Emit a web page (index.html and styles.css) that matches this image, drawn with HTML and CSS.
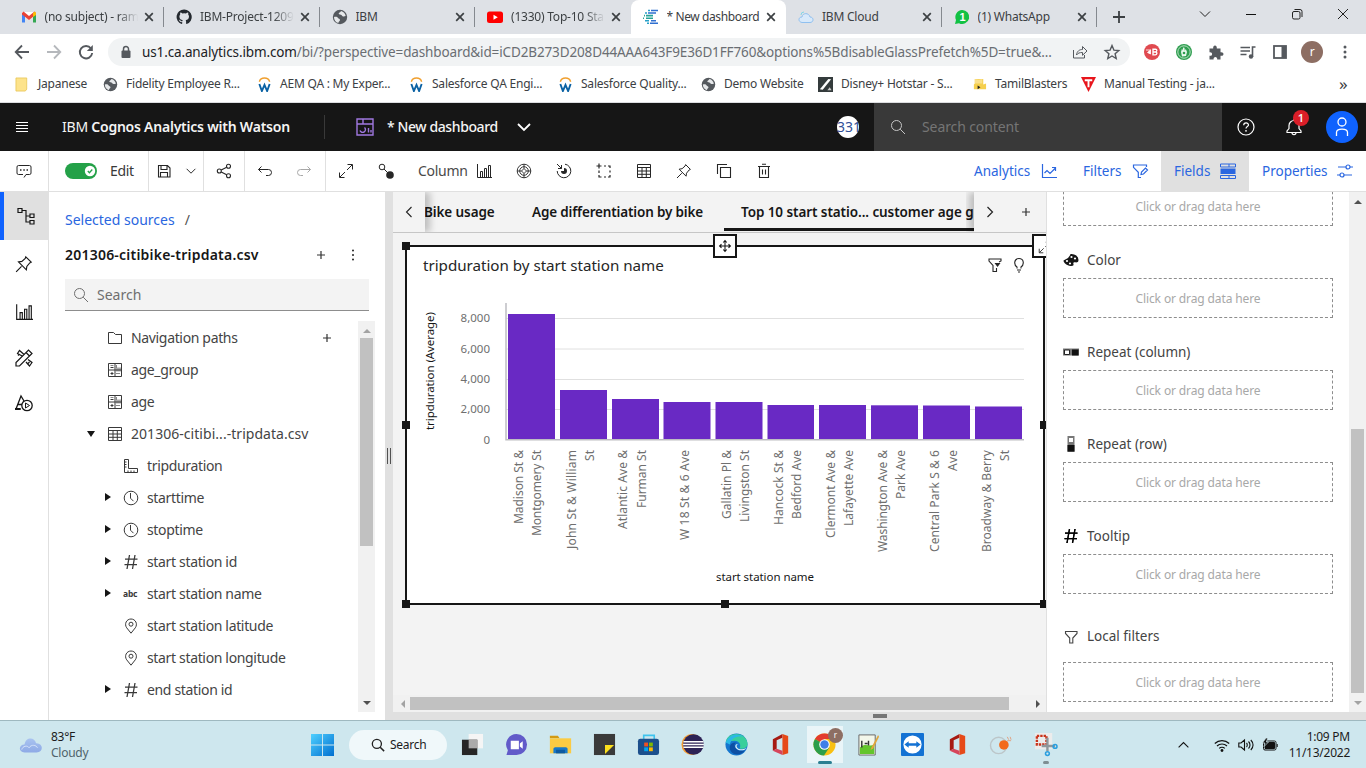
FILE: index.html
```
<!DOCTYPE html>
<html lang="en">
<head>
<meta charset="utf-8">
<title>* New dashboard</title>
<link rel="stylesheet" href="styles.css">
</head>
<body>
<svg class="defs" aria-hidden="true">
  <symbol id="x" viewBox="0 0 10 10"><path d="M1.200 1.200l7.600 7.600M8.800 1.200L1.200 8.800" stroke="#3c4043" stroke-width="1.700" fill="none"/></symbol>
  <symbol id="globe" viewBox="0 0 16 16"><circle cx="8" cy="8" r="7.200" fill="#55595e"/><path d="M2 8c2-.5 3.500 0 4 1s2 .6 2 2-1.800 1.400-1.600 3C3.500 13.300 2 11 2 8zM9 2c-.5 1.500-2.500 1.500-2.300 2.800.2 1.200 2.300.4 3 1.500.6 1.200 2 1.600 4 .8C13.300 4.500 11.500 2.500 9 2z" fill="#e6e8ea"/></symbol>
  <symbol id="aem" viewBox="0 0 16 16"><path d="M2.500 5C4 -.2 12 -.2 13.500 5" fill="none" stroke="#f0a030" stroke-width="1.500"/><path d="M2.500 7.500L5.200 15 8 8.500l2.800 6.500 2.700-7.500" fill="none" stroke="#0b62a4" stroke-width="2"/></symbol>
  <symbol id="pin" viewBox="0 0 16 16"><path d="M1 15l4.800-4.800M9.600 1.600l4.800 4.800-1.300.6-2.600 3.200-.4 3-7-7 3-.5 3-2.700z" fill="none" stroke="currentColor"/></symbol>
  <symbol id="cols" viewBox="0 0 16 16"><path d="M1.500 1v13.500H16M4.500 14V8.500h2V14M8.500 14V5.500h2V14M12.500 14V2.500h2V14" fill="none" stroke="currentColor"/></symbol>
  <symbol id="table" viewBox="0 0 16 16"><path d="M1.500 1.500h13v13h-13zM1.500 4.500h13M1.500 8h13M1.500 11.300h13M6 4.500v10M10.300 4.500v10" fill="none" stroke="currentColor"/></symbol>
  <symbol id="calc" viewBox="0 0 16 16"><path d="M9 5.500h5v4H9z" fill="#aaa"/><path d="M9 11.500h4M3.500 3.500h3M9.500 3v3" stroke="#888" fill="none"/><path d="M1.500 1.500h13v13h-13zM8 1.500v13M1.500 8h13M3.500 5.500h3M3.500 11.500h3M5 10v3" fill="none" stroke="currentColor"/></symbol>
  <symbol id="clock" viewBox="0 0 16 16"><circle cx="8" cy="8" r="6.800" fill="none" stroke="currentColor"/><path d="M7.500 3v5.200l3 3" fill="none" stroke="currentColor"/></symbol>
  <symbol id="hash" viewBox="0 0 16 16"><path d="M6.500 1L4 15M12 1L9.500 15M2 5.200h12.500M1.500 10.700H14" fill="none" stroke="currentColor" stroke-width="1.300"/></symbol>
  <symbol id="loc" viewBox="0 0 16 16"><path d="M8 15.200L3.700 9.800C1 6 3.500 1 8 1s7 5 4.300 8.800z" fill="none" stroke="currentColor"/><circle cx="8" cy="6.200" r="2" fill="none" stroke="currentColor"/></symbol>
  <symbol id="mag" viewBox="0 0 16 16"><circle cx="6.500" cy="6.500" r="5" fill="none" stroke="currentColor"/><path d="M10.200 10.200L15 15" stroke="currentColor"/></symbol>
  <symbol id="plus" viewBox="0 0 16 16"><path d="M8 4v8M4 8h8" stroke="#333" stroke-width="1.200"/></symbol>
  <symbol id="filter" viewBox="0 0 16 16"><path d="M2.500 3.500h11.500v2L9.800 10v5H6.700v-5L2.500 5.500z" fill="none" stroke="currentColor" stroke-width="1.100"/></symbol>
  <symbol id="expand" viewBox="0 0 16 16"><path d="M9.500 1.500h5v5M14 2L9 7M6.500 14.500h-5v-5M2 14l5-5" fill="none" stroke="currentColor"/></symbol>
  <symbol id="office" viewBox="0 0 24 24"><path d="M4 6.500L14 1v4L8 7.500v9l-4 2z" fill="#a61a12"/><path d="M14 1l6 2v18l-6 2z" fill="#e64a19"/><path d="M4 18.500l4-2 6 2V23z" fill="#d6455b"/></symbol>
</svg>

<div class="browser">
  <div class="tabstrip">
    <div class="tab"><svg viewBox="0 0 16 16"><path d="M1 3v10h3V8l4 3 4-3v5h3V3" fill="#fff"/><path d="M1 4.500V13.500h3V7z" fill="#4285f4"/><path d="M15 4.500V13.500h-3V7z" fill="#34a853"/><path d="M1 4l1.500-1.500L8 7l5.500-4.500L15 4v1.500L8 11 1 5.500z" fill="#ea4335"/><path d="M12 4l2-1.500L15 4v2l-3 2z" fill="#fbbc04"/></svg><span class="lbl fade">(no subject) - ram</span><svg class="x"><use href="#x"/></svg></div>
    <div class="tab"><svg viewBox="0 0 16 16"><path d="M8 .5a7.500 7.500 0 0 0-2.400 14.600c.4 0 .6-.2.6-.5v-1.500c-2 .4-2.500-.8-2.700-1.300-.2-.4-.5-.8-.8-1 .8-.2 1.500.2 2 .9.500.8 1.100.7 1.600.5.1-.4.300-.7.500-.9-2-.3-3.400-1.200-3.400-3.700 0-.8.3-1.500.8-2-.1-.5-.2-1.200.1-2 .9 0 1.600.5 2.100.8a7 7 0 0 1 3.600 0c.5-.4 1.300-.8 2.100-.8.300.8.2 1.500.1 2 .5.500.8 1.200.8 2 0 2.500-1.500 3.400-3.400 3.700.3.300.5.800.5 1.500v1.800c0 .3.200.5.600.5A7.500 7.500 0 0 0 8 .5z" fill="#24292f"/></svg><span class="lbl fade">IBM-Project-1209</span><svg class="x"><use href="#x"/></svg></div>
    <div class="tab"><svg><use href="#globe"/></svg><span class="lbl">IBM</span><svg class="x"><use href="#x"/></svg></div>
    <div class="tab nosep"><svg viewBox="0 0 16 16"><rect y="2.500" width="16" height="11.500" rx="2.500" fill="#f00"/><path d="M6.500 5.700v5l4.300-2.500z" fill="#fff"/></svg><span class="lbl fade">(1330) Top-10 Sta</span><svg class="x"><use href="#x"/></svg></div>
    <div class="tab active nosep"><svg viewBox="0 0 16 16"><path d="M8 1.500h7M5 4h8M8 11.800h5M7 14.300h8" stroke="#2f6fd0" stroke-width="1.600"/><path d="M3 6.600h7M3 9.200h7M1 6.600h1M0 9.200h1" stroke="#27a398" stroke-width="1.600"/><path d="M2 4h2M5 1.500h2M2 11.800h4M4 14.300h2" stroke="#28a0c8" stroke-width="1.600"/></svg><span class="lbl">* New dashboard</span><svg class="x"><use href="#x"/></svg></div>
    <div class="tab"><svg viewBox="0 0 16 16"><path d="M4 13.500C0 13 0 8 4 8c.5-4.500 7-4.500 8 0 4 0 4 5.500 0 5.500z" fill="#d8e9fa" stroke="#8fc0f0"/><path d="M3 6a3 3 0 0 1 3-3" fill="none" stroke="#7fd6e8"/></svg><span class="lbl">IBM Cloud</span><svg class="x"><use href="#x"/></svg></div>
    <div class="tab"><svg viewBox="0 0 16 16"><path d="M8 1a7 7 0 1 1-3 13.200L1 15l1-4A7 7 0 0 1 8 1z" fill="#12c143"/><text x="5.500" y="12" font-size="11" font-weight="700" fill="#fff" font-family="Liberation Sans">1</text></svg><span class="lbl">(1) WhatsApp</span><svg class="x"><use href="#x"/></svg></div>
    <svg class="newtab" viewBox="0 0 16 16"><path d="M8 2v12M2 8h12" stroke="#3c4043" stroke-width="1.800"/></svg>
    <div class="winctl">
      <svg viewBox="0 0 16 16"><path d="M3 5.500l5 5 5-5" fill="none" stroke="#222"/></svg>
      <svg viewBox="0 0 16 16"><path d="M3 8.500h10" stroke="#111"/></svg>
      <svg viewBox="0 0 16 16"><rect x="3.500" y="5.500" width="7.500" height="7.500" rx="1.500" fill="none" stroke="#222"/><path d="M5.500 3.500h5.500a2 2 0 0 1 2 2V11" fill="none" stroke="#222"/></svg>
      <svg viewBox="0 0 16 16"><path d="M3 3l10 10M13 3L3 13" stroke="#222"/></svg>
    </div>
  </div>
  <div class="address">
    <svg viewBox="0 0 16 16"><path d="M15 8H2M8 1.500L1.700 8 8 14.500" fill="none" stroke="#55595e" stroke-width="1.800"/></svg>
    <svg viewBox="0 0 16 16"><path d="M1 8h13M8 1.500L14.300 8 8 14.500" fill="none" stroke="#b5b8bc" stroke-width="1.800"/></svg>
    <svg viewBox="0 0 16 16"><path d="M13 4.500A6.200 6.200 0 1 0 14.200 9" fill="none" stroke="#55595e" stroke-width="1.900"/><path d="M14.800 1v6h-6z" fill="#55595e"/></svg>
    <div class="pill">
      <svg viewBox="0 0 16 16"><rect x="3.500" y="6.500" width="9" height="7.500" rx="1" fill="#55595e"/><path d="M5.500 7V5a2.500 2.500 0 0 1 5 0v2" fill="none" stroke="#55595e" stroke-width="1.500"/></svg>
      <span class="url"><b>us1.ca.analytics.ibm.com</b>/bi/?perspective=dashboard&amp;id=iCD2B273D208D44AAA643F9E36D1FF760&amp;options%5BdisableGlassPrefetch%5D=true&amp;...</span>
      <svg class="share" viewBox="0 0 16 16"><path d="M1.500 6v8h11v-3M4.500 11c.5-4 3-5.500 6-5.500V2.500l4.500 4.500-4.500 4.300V8.500c-3 0-4.500.5-6 2.500z" fill="none" stroke="#55595e"/></svg>
      <svg class="star" viewBox="0 0 16 16"><path d="M8 1.500l1.900 4.600 4.900.4-3.700 3.200 1.100 4.800L8 12l-4.200 2.500 1.100-4.800L1.200 6.500l4.900-.4z" fill="none" stroke="#55595e" stroke-width="1.400"/></svg>
    </div>
    <div class="ext">
      <svg viewBox="0 0 16 16"><circle cx="8" cy="8" r="8" fill="#e04a50"/><path d="M2 6h5M3.500 8.500l3-2.500v4z" fill="#fff" stroke="#fff" stroke-width=".8"/><path d="M9 5.200h2.500c2 0 1.500 2.600 0 2.800 2 0 1.700 2.900-.3 2.900H9zM9 8h2.500" fill="none" stroke="#fff" stroke-width="1.400"/></svg>
      <svg viewBox="0 0 16 16"><circle cx="8" cy="8" r="8" fill="#2f9e50"/><circle cx="8" cy="8" r="6.200" fill="none" stroke="#d7f0dc" stroke-width=".8"/><path d="M5 8l1-3.500 1 2V3.500l1.500.2.300 3 1-1.700 1.200 3-1 4-4 .5z" fill="#e8f7ec"/><circle cx="8" cy="9" r="1.300" fill="#2f9e50"/></svg>
      <svg viewBox="0 0 16 16"><path d="M1.500 4.500h3.700c-.6-4 4.200-4 3.600 0h3.700v3.700c4-.6 4 4.200 0 3.600v3.700H9.200c.6-3.500-4.200-3.500-3.600 0H1.500v-3.700c3.500.6 3.500-4.200 0-3.600z" fill="#55595e"/></svg>
      <svg viewBox="0 0 16 16"><path d="M.5 3.500h9.500M.5 7h9.500M.5 10.500h6M12.500 13V3h3" fill="none" stroke="#55595e" stroke-width="1.600"/><circle cx="11" cy="12.500" r="2.200" fill="#55595e"/></svg>
      <svg viewBox="0 0 16 16"><rect x="2" y="2" width="12" height="12" fill="none" stroke="#55595e" stroke-width="1.800"/><path d="M9.500 2H14v12H9.500z" fill="#55595e"/></svg>
      <span class="avatar">r</span>
      <svg viewBox="0 0 16 16"><g fill="#55595e"><circle cx="9" cy="3" r="1.500"/><circle cx="9" cy="8" r="1.500"/><circle cx="9" cy="13" r="1.500"/></g></svg>
    </div>
  </div>
  <div class="bookmarks">
    <div><svg viewBox="0 0 16 16"><path d="M1 1h11.500v12L11 15H1z" fill="#fde38b" stroke="#e8c34f" stroke-width=".8"/></svg>Japanese</div>
    <div><svg><use href="#globe"/></svg>Fidelity Employee R...</div>
    <div><svg><use href="#aem"/></svg>AEM QA : My Exper...</div>
    <div><svg><use href="#aem"/></svg>Salesforce QA Engi...</div>
    <div><svg><use href="#aem"/></svg>Salesforce Quality...</div>
    <div><svg><use href="#globe"/></svg>Demo Website</div>
    <div><svg viewBox="0 0 16 16"><rect width="16" height="16" fill="#343b3c"/><path d="M2 13L11 2l3 .5L5 13.500z" fill="#fff"/><path d="M10 14l2.500-3 2 3z" fill="#ccc"/></svg>Disney+ Hotstar - S...</div>
    <div><svg viewBox="0 0 16 16"><path d="M3 2h9v6l3-1v6H2V8l1-1z" fill="#f5cf4e"/><path d="M3 2l4 1 4-1v5H3z" fill="#fae08a"/><path d="M6 9l3 2-3 2z" fill="#222"/></svg>TamilBlasters</div>
    <div><svg viewBox="0 0 16 16"><path d="M0 0h16L8 16z" fill="#e8151c"/><path d="M4 3.500h8M8 3.500V11" stroke="#fff" stroke-width="2"/></svg>Manual Testing - ja...</div>
    <div class="more">»</div>
  </div>
</div>

<header class="appbar">
  <svg class="burger" viewBox="0 0 16 16"><path d="M2 3.500h12M2 6.500h12M2 9.500h12M2 12.500h12" stroke="#fff"/></svg>
  <div class="brand">IBM <b>Cognos Analytics with Watson</b></div>
  <div class="doc">
    <svg viewBox="0 0 18 18"><path d="M1 1h16v16H1zM1 6h16M7 1v5M12.500 10v4.500M15 12v2.500" fill="none" stroke="#a078e0" stroke-width="1.400"/><path d="M8.500 9.500a2.800 2.800 0 1 1-4.500 3" fill="none" stroke="#a078e0" stroke-width="1.400"/></svg>
    <span>* New dashboard</span>
    <svg class="chev" viewBox="0 0 14 14"><path d="M1 4l6 6 6-6" fill="none" stroke="#fff" stroke-width="1.800"/></svg>
  </div>
  <div class="count"><span>331</span></div>
  <div class="topsearch"><svg><use href="#mag"/></svg><span>Search content</span></div>
  <div class="user">
    <svg class="help" viewBox="0 0 18 18"><circle cx="9" cy="9" r="8" fill="none" stroke="#fff" stroke-width="1.200"/><path d="M6.700 7.200c0-3 4.800-3 4.800-.2C11.500 8.700 9 8.500 9 10.500" fill="none" stroke="#fff" stroke-width="1.200"/><circle cx="9" cy="12.800" r=".9" fill="#fff"/></svg>
    <div class="bell"><svg viewBox="0 0 18 18"><path d="M2 14.500v-1.500l2-2.500V7.500a5 5 0 0 1 10 0v3l2 2.500v1.500zM7 14.500a2 2.200 0 0 0 4 0M9 1v1.500" fill="none" stroke="#fff" stroke-width="1.200"/></svg><span class="badge">1</span></div>
    <svg class="me" viewBox="0 0 32 32"><circle cx="16" cy="16" r="16" fill="#0f62fe"/><circle cx="16" cy="11" r="4" fill="none" stroke="#fff" stroke-width="1.300"/><path d="M10.500 25v-3.500c0-4.500 11-4.500 11 0V25" fill="none" stroke="#fff" stroke-width="1.300"/></svg>
  </div>
</header>

<div class="toolbar">
  <div class="cell w48"><svg viewBox="0 0 16 16"><path d="M8 14.500l2-3h3.500a1.500 1.500 0 0 0 1.500-1.500V4a1.500 1.500 0 0 0-1.500-1.500h-11A1.500 1.500 0 0 0 1 4v6a1.500 1.500 0 0 0 1.500 1.500H7" fill="none" stroke="currentColor"/><path d="M4 7h1.500M7.300 7h1.500M10.500 7H12" stroke="currentColor" stroke-width="1.500"/></svg></div>
  <div class="cell edit"><svg class="toggle" viewBox="0 0 32 16"><rect width="32" height="16" rx="8" fill="#24a148"/><circle cx="25" cy="8" r="5.200" fill="#fff"/><path d="M22.800 8l1.600 1.700L27.300 6.500" fill="none" stroke="#24a148" stroke-width="1.300"/></svg><span>Edit</span></div>
  <div class="cell save"><svg viewBox="0 0 16 16"><path d="M2.500 2.500h9l2.500 2.500v9H2.500zM5 2.500v4h6v-4M4.500 14V9.500h7V14" fill="none" stroke="currentColor" stroke-width="1.100"/></svg><svg class="sm" viewBox="0 0 16 16"><path d="M3 5.500l5 5 5-5" fill="none" stroke="currentColor" stroke-width="1.100"/></svg></div>
  <div class="cell w40"><svg viewBox="0 0 16 16"><g fill="none" stroke="currentColor" stroke-width="1.100"><circle cx="3.300" cy="8" r="2"/><circle cx="12.500" cy="3.300" r="2"/><circle cx="12.500" cy="12.700" r="2"/><path d="M5.200 7l5.500-2.800M5.200 9l5.500 2.800"/></g></svg></div>
  <div class="cell undo"><svg viewBox="0 0 16 16"><path d="M4.500 3.500l-3 3 3 3M1.500 6.500h10a3 3 0 0 1 0 6H9" fill="none" stroke="currentColor"/></svg><svg class="dim" viewBox="0 0 16 16"><path d="M11.500 3.500l3 3-3 3M14.500 6.500h-10a3 3 0 0 0 0 6H7" fill="none" stroke="currentColor"/></svg></div>
  <div class="tools">
    <i><svg><use href="#expand"/></svg></i>
    <i><svg viewBox="0 0 16 16"><circle cx="4" cy="4" r="2.800" fill="none" stroke="currentColor"/><path d="M6 6l4 4" stroke="currentColor"/><circle cx="12" cy="12" r="3.800" fill="currentColor"/></svg></i>
    <span class="coltype">Column</span>
    <i class="first"><svg><use href="#cols"/></svg></i>
    <i><svg viewBox="0 0 16 16"><g fill="none" stroke="currentColor" stroke-width=".9"><circle cx="8" cy="8" r="6.800"/><path d="M8 5.500L10.500 8 8 10.500 5.500 8zM8 1v4.500M8 10.500V15M1 8h4.500M10.500 8H15"/><circle cx="8" cy="8" r="4.300"/></g></svg></i>
    <i><svg viewBox="0 0 16 16"><path d="M9 1.200A6.800 6.800 0 1 1 1.200 8M1 1l4.500 4.500M5.500 2v3.500H2" fill="none" stroke="currentColor"/><path d="M8 5A3 3 0 1 1 5 8H8z" fill="currentColor"/></svg></i>
    <i><svg viewBox="0 0 16 16"><path d="M.5 3h5M3 .5v5M8 3h2M12 3h2v2M14 7.500v2M14 12v2h-2M10 14H8M5.500 14H3v-2M3 10V7.500" fill="none" stroke="currentColor" stroke-width="1.200"/></svg></i>
    <i><svg><use href="#table"/></svg></i>
    <i><svg><use href="#pin"/></svg></i>
    <i><svg viewBox="0 0 16 16"><path d="M4.500 4.500h10v10h-10zM1.500 11V1.500H11" fill="none" stroke="currentColor" stroke-width="1.100"/></svg></i>
    <i><svg viewBox="0 0 16 16"><path d="M2 3.500h12M3.500 3.500v11h9v-11M6 1.200h4M6.500 6.500v5M9.500 6.500v5" fill="none" stroke="currentColor" stroke-width="1.100"/></svg></i>
  </div>
  <div class="modes">
    <div class="m1"><span>Analytics</span><svg viewBox="0 0 16 16"><path d="M1.500 1v13.500H16M3.500 10L6 7.500l3 3L14.500 5M11 4.500h3.500V8" fill="none" stroke="currentColor" stroke-width="1.200"/></svg></div>
    <div class="m2"><span>Filters</span><svg viewBox="0 0 16 16"><path d="M9 14.500H6.300V9.300L1.500 4.300V2h13v2M9 11.500l.5-2.500 4-4 2 2-4 4z" fill="none" stroke="currentColor" stroke-width="1.200"/></svg></div>
    <div class="m3"><span>Fields</span><svg viewBox="0 0 16 16"><path d="M.5 1h15v3H.5zM.5 12.500h15v3H.5zM9 1v3M9 12.500v3" fill="none" stroke="currentColor"/><path d="M.5 5.500h15v5.500H.5z" fill="currentColor"/></svg></div>
    <div class="m4"><span>Properties</span><svg viewBox="0 0 16 16"><g fill="none" stroke="currentColor" stroke-width="1.200"><circle cx="11" cy="4" r="2"/><circle cx="5" cy="12" r="2"/><path d="M1 4h8M13 4h3M0 12h3M7 12h8"/></g></svg></div>
  </div>
</div>

<main class="work">
  <nav class="rail">
    <div class="on"><svg viewBox="0 0 18 18"><path d="M1 1.500h4v4H1zM13 7h4v3.500h-4zM13 13.500h4V17h-4zM5 3.500h4v11.500h4M9 9h4" fill="none" stroke="currentColor" stroke-width="1.200"/></svg></div>
    <div><svg><use href="#pin"/></svg></div>
    <div><svg><use href="#cols"/></svg></div>
    <div class="tight"><svg viewBox="0 0 18 18"><g fill="none" stroke="currentColor" stroke-width="1.200"><path d="M1 17v-3.500L13.500 1 17 4.500 4.500 17zM11 3.500L14.500 7"/><path d="M7.200 7L2.500 4.500 4.500 1.500l4.300 3.800M11 13l3.500 4 2.500-3.500-4-3M3 6.500l1.500-1.500M13 14.500l1.500-1.500"/></g></svg></div>
    <div class="tight"><svg viewBox="0 0 18 18"><path d="M1 15L6 2l3 5M3 10.500h4M0 15h6" fill="none" stroke="currentColor" stroke-width="1.300"/><path d="M0 14h5v2H0z" fill="currentColor"/><circle cx="12" cy="11.500" r="5.200" fill="none" stroke="currentColor" stroke-width="1.300"/><path d="M10.500 9v5l4-2.500z" fill="none" stroke="currentColor"/></svg></div>
  </nav>

  <section class="sources">
    <div class="crumb"><span>Selected sources</span><em>/</em></div>
    <div class="srctitle"><b>201306-citibike-tripdata.csv</b><svg><use href="#plus"/></svg><svg viewBox="0 0 16 16"><g fill="#222"><circle cx="8" cy="3.500" r="1"/><circle cx="8" cy="8" r="1"/><circle cx="8" cy="12.500" r="1"/></g></svg></div>
    <div class="srcsearch"><svg><use href="#mag"/></svg><span>Search</span></div>
    <div class="treewrap">
      <div class="tree">
        <div class="row"><svg viewBox="0 0 16 16"><path d="M1.500 2.500h5l2 2h6v9h-13z" fill="none" stroke="currentColor"/></svg><span>Navigation paths</span><svg class="add"><use href="#plus"/></svg></div>
        <div class="row"><svg><use href="#calc"/></svg><span>age_group</span></div>
        <div class="row"><svg><use href="#calc"/></svg><span>age</span></div>
        <div class="row open"><svg><use href="#table"/></svg><span>201306-citibi...-tripdata.csv</span></div>
        <div class="row kid"><svg viewBox="0 0 16 16"><path d="M1.500 1.500h4v9h9v4h-13zM1.500 4H3.500M1.500 6.500h2M1.500 9h2M5 14.500v-2M8 14.500v-2M11 14.500v-2" fill="none" stroke="currentColor"/></svg><span>tripduration</span></div>
        <div class="row kid shut"><svg><use href="#clock"/></svg><span>starttime</span></div>
        <div class="row kid shut"><svg><use href="#clock"/></svg><span>stoptime</span></div>
        <div class="row kid shut"><svg><use href="#hash"/></svg><span>start station id</span></div>
        <div class="row kid shut"><b class="abc">abc</b><span>start station name</span></div>
        <div class="row kid"><svg><use href="#loc"/></svg><span>start station latitude</span></div>
        <div class="row kid"><svg><use href="#loc"/></svg><span>start station longitude</span></div>
        <div class="row kid shut"><svg><use href="#hash"/></svg><span>end station id</span></div>
      </div>
      <div class="vscroll"><i class="up"></i><i class="thumb"></i><i class="down"></i></div>
    </div>
  </section>

  <div class="splitter"><i></i></div>

  <div class="right">
    <div class="columns">
      <section class="canvas">
        <div class="dashtabs">
          <div class="prev"><svg viewBox="0 0 16 16"><path d="M10.500 3l-5 5 5 5" fill="none" stroke="#222" stroke-width="1.100"/></svg></div>
          <div class="names"><span class="t1">Bike usage</span><span class="t2">Age differentiation by bike</span><span class="t3">Top 10 start statio... customer age g</span></div>
          <div class="next"><svg viewBox="0 0 16 16"><path d="M5.500 3l5 5-5 5" fill="none" stroke="#222" stroke-width="1.200"/></svg></div>
          <div class="plus"><svg><use href="#plus"/></svg></div>
        </div>
        <div class="board">
          <div class="widget">
            <i class="h tl"></i><i class="h ml"></i><i class="h bl"></i><i class="h bc"></i><i class="h mr"></i><i class="h br"></i>
            <div class="move"><svg viewBox="0 0 16 16"><path d="M8 2v12M2 8h12M6 4l2-2.200L10 4M6 12l2 2.200L10 12M4 6L1.800 8 4 10M12 6l2.200 2L12 10" fill="none" stroke="currentColor" stroke-width="1.200"/></svg></div>
            <div class="grow"><svg><use href="#expand"/></svg></div>
            <div class="whead"><span>tripduration by start station name</span><svg viewBox="0 0 16 16"><path d="M12 5l2-1V2H2v2l4 4.500v6h3.500V11" fill="none" stroke="currentColor" stroke-width="1.100"/><path d="M7.500 6h6L10.500 10z" fill="currentColor"/></svg><svg viewBox="0 0 16 16"><path d="M6 11.500V10C2.500 7.500 3 1.500 8 1.500s5.500 6 2 8.500v1.500M6 13h4M7 15h2" fill="none" stroke="currentColor" stroke-width="1.100"/></svg></div>
            <svg class="chart" viewBox="407 280 636 320">
              <path d="M506 318.500h518M506 349h518M506 379.500h518M506 409.500h518" stroke="#e0e0e0"/>
              <g fill="#6929c4"><rect x="508" y="314" width="47" height="125"/><rect x="560" y="390" width="47" height="49"/><rect x="612" y="399" width="47" height="40"/><rect x="663.500" y="402" width="47" height="37"/><rect x="715.500" y="402" width="47" height="37"/><rect x="767.500" y="405" width="46.500" height="34"/><rect x="819" y="405" width="47" height="34"/><rect x="871" y="405.300" width="47" height="34"/><rect x="923" y="405.500" width="47" height="34"/><rect x="975" y="406.500" width="47" height="33"/></g>
              <path d="M506 303v136.700h518" fill="none" stroke="#bdbdc2" stroke-width="1.500"/>
              <g class="ticks"><text x="490" y="322">8,000</text><text x="490" y="352.500">6,000</text><text x="490" y="383">4,000</text><text x="490" y="413">2,000</text><text x="490" y="443.500">0</text></g>
              <text class="axis" transform="translate(433.500 430) rotate(-90)" textLength="118">tripduration (Average)</text>
              <text class="axis" x="716" y="581" textLength="98">start station name</text>
              <g class="cats">
                <text transform="translate(523 450) rotate(-90)" textLength="74">Madison St &amp;</text><text transform="translate(541 450) rotate(-90)" textLength="86">Montgomery St</text>
                <text transform="translate(575.500 450) rotate(-90)" textLength="99">John St &amp; William</text><text transform="translate(593.500 450) rotate(-90)" textLength="11">St</text>
                <text transform="translate(627 450) rotate(-90)" textLength="79">Atlantic Ave &amp;</text><text transform="translate(645.500 450) rotate(-90)" textLength="58">Furman St</text>
                <text transform="translate(688.500 450) rotate(-90)" textLength="90">W 18 St &amp; 6 Ave</text>
                <text transform="translate(730.500 450) rotate(-90)" textLength="69">Gallatin Pl &amp;</text><text transform="translate(748.500 450) rotate(-90)" textLength="72">Livingston St</text>
                <text transform="translate(782.500 450) rotate(-90)" textLength="75">Hancock St &amp;</text><text transform="translate(800.500 450) rotate(-90)" textLength="69">Bedford Ave</text>
                <text transform="translate(834.500 450) rotate(-90)" textLength="88">Clermont Ave &amp;</text><text transform="translate(852.500 450) rotate(-90)" textLength="76">Lafayette Ave</text>
                <text transform="translate(886.500 450) rotate(-90)" textLength="102">Washington Ave &amp;</text><text transform="translate(904.500 450) rotate(-90)" textLength="49">Park Ave</text>
                <text transform="translate(938.500 450) rotate(-90)" textLength="102">Central Park S &amp; 6</text><text transform="translate(956.500 450) rotate(-90)" textLength="21">Ave</text>
                <text transform="translate(990.500 450) rotate(-90)" textLength="102">Broadway &amp; Berry</text><text transform="translate(1008.500 450) rotate(-90)" textLength="11">St</text>
              </g>
            </svg>
          </div>
        </div>
        <div class="hscroll"><i class="left"></i><i class="thumb"></i><i class="rt"></i></div>
      </section>
      <aside class="fields">
        <div class="slots">
          <div class="drop cut">Click or drag data here</div>
          <div class="name"><svg viewBox="0 0 16 16"><path d="M8 2a7 6 0 0 1 7.500 6c0 2.500-2 2.500-3.500 2.300-1.500-.2-2 .7-1.500 2 .5 1.700-1.500 1.700-3 1.600C4 13.500.5 11 .5 8.500L5 6z" fill="#161616"/><path d="M8 2v4" stroke="#161616"/><g fill="#fff"><circle cx="8.500" cy="5" r="1.100"/><circle cx="12" cy="6.500" r="1.100"/><circle cx="4" cy="9" r="1.100"/><circle cx="7" cy="11.500" r="1.100"/></g></svg>Color</div>
          <div class="drop">Click or drag data here</div>
          <div class="name"><svg viewBox="0 0 16 16"><path d="M0 4.500h16v7H0z" fill="#777"/><path d="M1.500 6h5v4.500h-5z" fill="#fff" stroke="#222"/><path d="M9 5.500h6.500v6H9z" fill="#111"/></svg>Repeat (column)</div>
          <div class="drop">Click or drag data here</div>
          <div class="name"><svg viewBox="0 0 16 16"><path d="M4.500 0h7v16h-7z" fill="#777"/><path d="M6 2h4v4H6z" fill="#fff"/><path d="M4.500 9h7v6.500h-7z" fill="#111"/></svg>Repeat (row)</div>
          <div class="drop">Click or drag data here</div>
          <div class="name"><svg class="heavy"><use href="#hash"/></svg>Tooltip</div>
          <div class="drop">Click or drag data here</div>
          <div class="name last"><svg><use href="#filter"/></svg>Local filters</div>
          <div class="drop">Click or drag data here</div>
        </div>
        <div class="vscroll side"><i class="up"></i><i class="thumb"></i><i class="down"></i></div>
      </aside>
    </div>
    <div class="drawer"><i></i></div>
  </div>
</main>

<footer class="taskbar">
  <div class="weather"><svg viewBox="0 0 26 18"><defs><linearGradient id="cg" x2="0" y2="1"><stop stop-color="#a9c3f0"/><stop offset="1" stop-color="#8eaae6"/></linearGradient></defs><path d="M6 17C-1 17-.5 8.500 6 8.500 7 0 17 0 18.500 7c8-.5 8.500 10 .5 10z" fill="url(#cg)"/><path d="M3 14c1-4 6-5 8-2 2-4 8-3 9 0" stroke="#d7e4fa" fill="none"/></svg><p>83°F<br><span>Cloudy</span></p></div>
  <svg class="win" viewBox="0 0 24 24"><defs><linearGradient id="wg" x2="1" y2="1"><stop stop-color="#4fd0ff"/><stop offset="1" stop-color="#006fd0"/></linearGradient></defs><path d="M0 1h11.500v11H0zM12.500 1H24v11H12.500zM0 13h11.500v11H0zM12.500 13H24v11H12.500z" fill="url(#wg)"/></svg>
  <div class="find"><svg viewBox="0 0 16 16"><circle cx="6.700" cy="6.700" r="5.200" fill="none" stroke="#222" stroke-width="1.500"/><path d="M10.500 10.500L15 15" stroke="#222" stroke-width="1.700"/></svg>Search</div>
  <div class="apps">
    <i><svg viewBox="0 0 24 24"><path d="M8 1h15v15H8z" fill="#f5f5f5"/><path d="M1 7h16v16H1z" fill="#262626"/><path d="M8 7h9v9H8z" fill="#aaa"/></svg></i>
    <i><svg viewBox="0 0 24 24"><path d="M12 1a11 11 0 1 1 0 22H1.500L3 18A11 11 0 0 1 12 1z" fill="#625bc9"/><path d="M6 8h8.500v9H6zM15.500 11l3-2.500v8l-3-2.500z" fill="#fff"/></svg></i>
    <i><svg viewBox="0 0 26 24"><path d="M1 2h9l2 3h-11z" fill="#d39a12"/><path d="M1 5h24v17H1z" fill="#fbcb43"/><path d="M5 22v-5c0-1 1-2 2-2h12c1 0 2 1 2 2v5z" fill="#1879c8"/><path d="M8 18h10v4H8z" fill="#0d5aa0"/></svg></i>
    <i><svg viewBox="0 0 24 24"><path d="M1 1h22v22H1z" fill="#3a3a3a"/><path d="M12.500 12.500H22L12.500 22z" fill="#fbdf1d"/></svg></i>
    <i><svg viewBox="0 0 24 24"><path d="M7 7V2.500h11V7" fill="none" stroke="#3ec4ee" stroke-width="1.700"/><rect x="1" y="6" width="22" height="17" rx="2.500" fill="#1c4f8c"/><path d="M7.500 10h4v4h-4z" fill="#f25022"/><path d="M12.500 10h4v4h-4z" fill="#7fba00"/><path d="M7.500 15h4v4h-4z" fill="#00a4ef"/><path d="M12.500 15h4v4h-4z" fill="#ffb900"/></svg></i>
    <i><svg viewBox="0 0 24 24"><circle cx="11.500" cy="12" r="11" fill="#f39a2e"/><circle cx="13" cy="12" r="10.800" fill="#2c2255"/><path d="M2.500 9.200h21M2.200 12h21.700M2.500 14.800h21" stroke="#fff" stroke-width="1.500"/></svg></i>
    <i><svg viewBox="0 0 24 24"><circle cx="12" cy="12" r="11.500" fill="#1677cf"/><path d="M.8 10C2-2 22-2 23.500 11c.2 5-5 6.500-8.500 5 2-2 1-8-5-8-4 0-7 1-9.200 2z" fill="#39cf9c"/><path d="M.8 10C4 1 14 0 19 4c-7-1-12 1-14 8z" fill="#2bb8e6"/><path d="M10 12c0 5 5 8 11 6-6 8-17 4-16-4 1-4 6-5 8-3-2-1-3 0-3 1z" fill="#0d4fa3"/><path d="M14 11.500c-3 .5-2.500 5 2 5.500 3 0 5-.5 6.500-2-1.500 4-9 4-11.500 0-1-2.500 1-4 3-3.500z" fill="#e7f3f8"/></svg></i>
    <i><svg><use href="#office"/></svg></i>
    <i class="on"><svg viewBox="0 0 24 24"><circle cx="12" cy="12" r="11.500" fill="#f9c012"/><path d="M12 12L2 6.200A11.500 11.500 0 0 1 22 6.300H12z" fill="#e33b2e"/><path d="M12 12L2 6.200A11.500 11.500 0 0 0 11.500 23.500L17 15z" fill="#2c9e4b"/><circle cx="12" cy="12" r="5.500" fill="#fff"/><circle cx="12" cy="12" r="4.400" fill="#3f7fe8"/></svg><span class="avatar mini">r</span></i>
    <i><svg viewBox="0 0 24 24"><path d="M2 2h17v21H2z" fill="#f3f7ea" stroke="#666"/><path d="M3 15c6-5 10 0 15-3v10H3z" fill="#63c52c"/><path d="M5 8v7M8 11h3M12 8v5" stroke="#333" stroke-width="1.500"/><path d="M22 2l-7 13-1 3 3-2 6-12z" fill="#e0a63c"/></svg></i>
    <i><svg viewBox="0 0 24 24"><rect width="24" height="24" rx="1" fill="#1372d3"/><circle cx="12" cy="12" r="9.500" fill="#fff"/><path d="M3.500 12L8 8.500v2.300h8V8.500l4.500 3.500-4.500 3.500v-2.300H8v2.300z" fill="#1372d3"/></svg></i>
    <i><svg><use href="#office"/></svg></i>
    <i><svg viewBox="0 0 24 24"><circle cx="9" cy="13" r="8.500" fill="none" stroke="#bcc6c9" stroke-width="1.500"/><circle cx="14.500" cy="12.500" r="5" fill="#f26a1b"/><path d="M18 4l1.500 3M21 4l1 3M18 8h4" stroke="#e0a080" stroke-width="1"/></svg></i>
    <i><svg viewBox="0 0 24 24"><path d="M1 0h18v17H1z" fill="#ececec"/><path d="M3 3h10v9H3z" fill="none" stroke="#c8341c" stroke-width="2.500" stroke-dasharray="2.500 1"/><path d="M14 5v14M8 13.500h14" stroke="#8e979b" stroke-width="2.500"/><circle cx="22" cy="14" r="2" fill="none" stroke="#2b9fdf" stroke-width="1.600"/><circle cx="14" cy="21.500" r="2" fill="none" stroke="#2b9fdf" stroke-width="1.600"/></svg></i>
  </div>
  <div class="tray">
    <svg class="c" viewBox="0 0 16 16"><path d="M2 11l6-6 6 6" fill="none" stroke="#111" stroke-width="1.300"/></svg>
    <svg class="wf" viewBox="0 0 16 16"><g fill="none" stroke="#111" stroke-width="1.200"><path d="M.8 6.500a10.500 10.500 0 0 1 14.400 0M3 9a7.200 7.200 0 0 1 10 0M5.200 11.400a4 4 0 0 1 5.600 0"/></g><circle cx="8" cy="13.500" r="1.400" fill="#111"/></svg>
    <svg class="sd" viewBox="0 0 16 16"><path d="M.8 6H3l3.500-3v10L3 10H.8zM8.500 6c1 1 1 3 0 4M10.500 4.500c2 2 2 5 0 7M12.800 3c3 3 3 7 0 10" fill="none" stroke="#111" stroke-width="1.100"/></svg>
    <svg class="bt" viewBox="0 0 16 16"><rect x="1.500" y="4" width="12.500" height="9" rx="1.500" fill="none" stroke="#111"/><path d="M3 5.500h9.500v6H3zM15.200 7v3" fill="#111" stroke="#111"/><path d="M4 1L.5 6H3L2 9.500 6.500 5H4.300L5.800 1z" fill="#111" stroke="#d0e8ee" stroke-width=".7"/></svg>
    <p>1:09 PM<br>11/13/2022</p>
  </div>
</footer>
</body>
</html>
```
FILE: styles.css
```
* { box-sizing: border-box; }
body { margin: 0; width: 1366px; height: 768px; overflow: hidden; background: #fff; color: #161616; font: 14px/18px "Noto Sans", sans-serif; }
svg { width: 16px; height: 16px; flex: none; display: block; overflow: visible; }
i { font-style: normal; }
p { margin: 0; }
.defs { display: none; }

/* browser chrome */
.browser { font: 12px/16px "Noto Sans", sans-serif; color: #3c4043; height: 103px; border-bottom: 1px solid #dcdde0; letter-spacing: -0.220px; }
.tabstrip { height: 34px; background: #dee1e6; display: flex; padding-left: 8.500px; }
.tab { width: 155.500px; display: flex; align-items: center; padding: 0 9px 0 12px; border-right: 1px solid transparent; position: relative; }
.tab::after { content: ""; width: 1px; height: 20px; background: #85898f; position: absolute; right: -1px; top: 7px; }
.tab.nosep::after { display: none; }
.tab .lbl { margin-left: 8px; flex: 1; white-space: nowrap; overflow: hidden; }
.tab .fade { -webkit-mask-image: linear-gradient(90deg, #000 75%, transparent 96%); }
.tab .x { width: 10px; height: 10px; margin-left: 2px; }
.tab.active { background: #fff; border-radius: 8px 8px 0 0; }
.tab.active .lbl { letter-spacing: -0.400px; }
.newtab { margin: 9px 0 0 14px; }
.winctl { margin-left: auto; display: flex; gap: 30px; padding: 6px 15px 0 0; }
.address { height: 34px; display: flex; align-items: center; padding: 2px 0 0 14px; }
.address > svg { margin-right: 16px; }
.pill { width: 1022px; height: 28px; border-radius: 14px; background: #f1f3f4; margin-left: -2px; padding: 0 10px; display: flex; align-items: center; }
.url { margin-left: 8px; font-size: 13.500px; letter-spacing: -0.130px; color: #6a6e73; width: 920px; white-space: nowrap; }
.url b { font-weight: 400; color: #202124; }
.pill .share { margin-left: 10px; }
.pill .star { margin-left: 16px; }
.ext { display: flex; align-items: center; gap: 16px; padding-left: 14px; }
.avatar { width: 22px; height: 22px; margin: 0 -3px; border-radius: 50%; background: #8d6e63; color: #fff; text-align: center; line-height: 21px; font-size: 12px; }
.bookmarks { height: 34px; display: grid; grid-template-columns: 88px 154px 152px 149px 143px 117px 154px 109px 255px auto; padding: 0 0 2px 15px; align-items: center; }
.bookmarks div { display: flex; gap: 8px; align-items: center; white-space: nowrap; }
.bookmarks svg { width: 15px; height: 15px; }
.bookmarks .more { font-size: 17px; margin-left: 3px; }

/* application bar */
.appbar { height: 48px; background: #161616; color: #f4f4f4; display: flex; align-items: center; }
.burger { margin-left: 14px; }
.brand { margin-left: 32px; width: 263px; border-right: 1px solid #393939; height: 24px; line-height: 24px; white-space: nowrap; letter-spacing: -0.230px; }
.brand b { font-weight: 600; }
.doc { display: flex; align-items: center; width: 512px; padding-left: 31px; font-weight: 500; white-space: nowrap; letter-spacing: -0.400px; }
.doc svg { width: 18px; height: 18px; }
.doc span { margin-left: 13px; width: 130px; }
.doc .chev { width: 14px; height: 14px; }
.count { width: 22px; height: 22px; border-radius: 50%; background: #fff; color: #304f98; font-size: 14px; line-height: 22px; white-space: nowrap; }
.topsearch { margin-left: 15px; width: 348px; height: 48px; background: #393939; display: flex; align-items: center; padding-left: 16px; color: #c6c6c6; }
.topsearch span { margin-left: 16px; color: #757575; letter-spacing: -0.100px; }
.user { display: flex; align-items: center; padding-left: 15px; }
.help, .bell, .bell svg { width: 18px; height: 18px; }
.bell { position: relative; margin: 0 23px 0 30px; }
.badge { position: absolute; left: 8px; top: -8px; width: 16px; height: 16px; border-radius: 8px; background: #da1e28; font: 600 11px/16px "Noto Sans", sans-serif; text-align: center; }
.me { width: 32px; height: 32px; }

/* toolbar */
.toolbar { height: 41px; border-bottom: 1px solid #e0e0e0; display: flex; color: #262626; }
.cell { display: flex; align-items: center; border-right: 1px solid #e0e0e0; }
.w48 { width: 49px; justify-content: center; }
.w40 { width: 41px; justify-content: center; }
.edit { width: 100px; padding-left: 16px; gap: 13px; color: #393939; letter-spacing: -0.300px; }
.toggle { width: 32px; }
.save { width: 55px; padding-left: 7px; gap: 12px; }
.sm { width: 14px; }
.undo { width: 81px; padding-left: 12px; gap: 23px; }
.dim { color: #a8a8a8; }
.tools { display: flex; align-items: center; }
.tools i { width: 40px; display: flex; justify-content: center; }
.tools .first { margin-left: 0; }
.coltype { width: 58px; padding-left: 12px; color: #4a4a4a; letter-spacing: -0.300px; }
.tools .first { margin-left: -0.500px; }
.modes { margin-left: auto; display: flex; color: #2a66e0; font-size: 13.500px; }
.modes div { display: flex; align-items: center; justify-content: space-between; }
.m1 { width: 83px; }
.m2 { width: 65px; margin-left: 26px; }
.m3 { width: 88px; padding: 0 13px; margin-left: 13px; background: #e0e0e0; }
.m4 { width: 117px; padding: 0 13px; }

/* work area */
.work { height: 528px; display: flex; }
.rail { width: 49px; border-right: 1px solid #e0e0e0; }
.rail div { height: 48px; display: grid; place-items: center; }
.rail svg { width: 18px; height: 18px; }
.rail .tight { height: 45px; padding-bottom: 1px; }
.rail .on { background: #e0e0e0; border-left: 4px solid #0f62fe; }
.sources { width: 336px; padding: 19px 0 0 16px; color: #393939; }
.crumb { color: #2a66e0; display: flex; gap: 10px; }
.crumb em { font-style: normal; color: #525252; }
.srctitle { margin-top: 17px; display: flex; align-items: center; gap: 16px; color: #161616; width: 296px; }
.srctitle b { font-weight: 600; flex: 1; white-space: nowrap; letter-spacing: 0.220px; }
.srcsearch { margin-top: 15px; width: 304px; height: 32px; background: #f3f3f3; border-bottom: 1px solid #8d8d8d; display: flex; align-items: center; padding-left: 8px; gap: 8px; color: #6f6f6f; }
.treewrap { display: flex; margin-top: 10px; height: 391px; }
.tree { width: 293px; padding: 1px 0 0 42px; letter-spacing: -0.340px; }
.row { height: 32px; display: flex; align-items: center; gap: 8px; position: relative; white-space: nowrap; }
.row span { color: #444; }
.row .add { margin-left: 73px; }
.kid { padding-left: 16px; }
.abc { width: 16px; font-size: 8.500px; letter-spacing: -0.200px; }
.open { letter-spacing: 0.040px; }
.open::before { content: ""; position: absolute; left: -20px; top: 13px; border: 4px solid transparent; border-top: 6px solid #161616; border-bottom: 0; }
.shut::before { content: ""; position: absolute; left: -2px; top: 11px; border: 4px solid transparent; border-left: 6px solid #161616; border-right: 0; }
.vscroll { width: 17px; background: #f1f1f1; display: flex; flex-direction: column; align-items: center; }
.vscroll .thumb { width: 13px; height: 208px; background: #c1c1c1; margin-top: 5px; }
.up { border: 4px solid transparent; border-bottom-color: #a3a3a3; margin-top: 4px; }
.down { border: 4px solid transparent; border-top-color: #505050; margin-top: auto; margin-bottom: 3px; }
.splitter { width: 8px; background: #e0e0e0; padding: 256px 0 0 2px; }
.splitter i { display: block; width: 4px; height: 16px; border: 1px solid #525252; border-width: 0 1px; }
.right { width: 973px; }
.columns { height: 520px; display: flex; }
.canvas { width: 653px; background: #f3f3f3; overflow: hidden; }
.dashtabs { height: 41px; display: flex; border-bottom: 1px solid #c6c6c6; font-weight: 600; }
.prev { width: 32px; display: grid; place-items: center; box-shadow: 5px 0 7px rgba(0,0,0,.22); clip-path: inset(0 -14px 0 0); }
.names { width: 549px; display: flex; line-height: 40px; white-space: nowrap; overflow: hidden; height: 39px; font-size: 13.500px; }
.t1 { width: 108px; margin-left: -1px; letter-spacing: -0.100px; }
.t2 { width: 192px; letter-spacing: -0.160px; }
.t3 { width: 250px; padding-left: 17px; border-bottom: 3px solid #161616; letter-spacing: -0.080px; }
.next { width: 32px; display: grid; place-items: center; box-shadow: -5px 0 7px rgba(0,0,0,.22); clip-path: inset(0 0 0 -8px); }
.plus { width: 40px; display: grid; place-items: center; background: #f3f3f3; }
.board { height: 462px; padding: 12px 0 0 12px; }
.widget { width: 640px; height: 360px; border: 2px solid #161616; background: #fff; position: relative; }
.h { position: absolute; width: 8px; height: 8px; background: #161616; }
.tl { left: -5px; top: -5px; }
.ml { left: -5px; top: 174px; }
.bl { left: -5px; bottom: -5px; }
.bc { left: 314px; bottom: -5px; }
.mr { right: -5px; top: 174px; }
.br { right: -5px; bottom: -5px; }
.move, .grow { position: absolute; width: 24px; height: 24px; border: 2px solid #161616; background: #fff; top: -13px; left: 306px; display: grid; place-items: center; }
.move svg { width: 14px; height: 14px; }
.grow { left: 625px; }
.grow svg { width: 13px; height: 13px; margin-top: 3px; }
.whead { height: 33px; padding: 3px 16px 0 16px; display: flex; align-items: center; gap: 8px; font-size: 15.200px; color: #262626; }
.whead span { flex: 1; letter-spacing: -0.030px; }
.chart { width: 636px; height: 320px; display: block; font-family: "Noto Sans", sans-serif; }
.ticks { font-size: 11.500px; fill: #6f6f6f; text-anchor: end; }
.axis { font-size: 11.500px; fill: #161616; }
.cats { font-size: 12px; fill: #6f6f6f; text-anchor: end; }
.hscroll { height: 17px; background: #f1f1f1; display: flex; align-items: center; padding-left: 4px; }
.hscroll .thumb { width: 599px; height: 13px; background: #c1c1c1; margin-left: 5px; }
.left { border: 4px solid transparent; border-right-color: #a3a3a3; }
.rt { border: 4px solid transparent; border-left-color: #505050; margin: 0 0 0 27px; }
.fields { width: 320px; border-left: 1px solid #e0e0e0; display: flex; justify-content: space-between; color: #444; }
.slots { width: 286px; padding-left: 16px; overflow: hidden; font-size: 13.500px; }
.drop { height: 40px; border: 1px dashed #8d8d8d; text-align: center; line-height: 39px; font-size: 12px; letter-spacing: -0.120px; color: #a8a8a8; }
.cut { margin-top: -6px; }
.name { height: 52px; padding-top: 16px; display: flex; gap: 8px; align-items: center; }
.name.last { height: 68px; }
.heavy { color: #000; filter: drop-shadow(.5px 0 #000); }
.side .thumb { height: 264px; margin-top: 225px; }
.side .up { border-bottom-color: #505050; }
.side .down { border-top-color: #a3a3a3; }
.drawer { height: 8px; background: #e0e0e0; padding: 2px 0 0 480px; }
.drawer i { display: block; width: 14px; height: 4px; background: #777; }

/* desktop taskbar */
.taskbar { height: 48px; background: #cee7ee; border-top: 1px solid #9fb9c0; display: flex; align-items: center; font: 12px/16px "Noto Sans", sans-serif; color: #1c1c1c; letter-spacing: -0.250px; }
.weather { width: 311px; padding-left: 19px; display: flex; align-items: center; gap: 8px; }
.weather svg { width: 24px; height: 18px; }
.weather span { color: #50636a; }
.win { width: 23px; height: 23px; }
.find { width: 98px; height: 30px; margin-left: 15px; border-radius: 15px; background: #f0f8fa; display: flex; align-items: center; padding-left: 22px; gap: 5px; }
.find svg { width: 14px; height: 14px; }
.apps { display: flex; margin-left: 3px; }
.apps i { width: 44.100px; height: 48px; display: grid; place-items: center; position: relative; }
.apps svg { width: 23px; height: 23px; }
.apps .on { background: linear-gradient(#eaf5f8, #eaf5f8) center 5px / 36px 37px no-repeat; }
.apps .on::after { content: ""; position: absolute; left: 15px; bottom: 5px; width: 14px; height: 3px; border-radius: 2px; background: #2a7f91; }
.apps i:last-child::after { content: ""; position: absolute; left: 20px; bottom: 5px; width: 6px; height: 3px; border-radius: 2px; background: #7e8e93; }
.mini { position: absolute; right: 4px; top: 7px; width: 15px; height: 15px; margin: 0; font-size: 8px; line-height: 14px; }
.tray { margin-left: auto; display: flex; align-items: center; padding-right: 16px; }
.tray .c { width: 13px; margin-right: 24px; }
.tray .wf, .tray .sd { margin-right: 8px; }
.tray p { text-align: right; width: 65px; margin-left: 7px; white-space: nowrap; }
```
